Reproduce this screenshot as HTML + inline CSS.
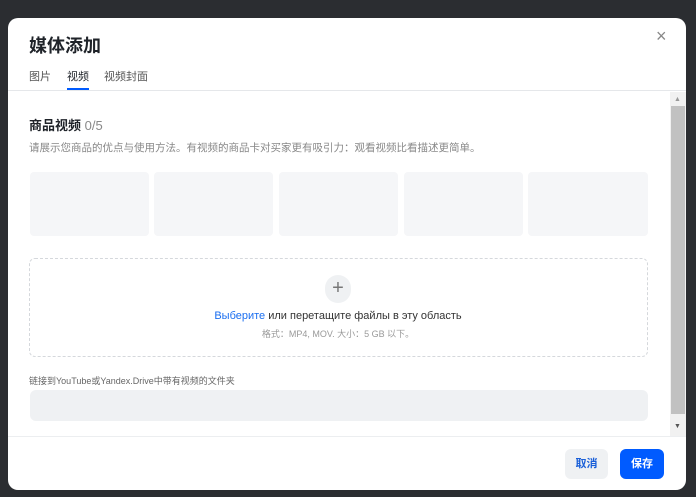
<html><head><style>
body{margin:0;width:696px;height:497px;background:#2b2d31;font-family:"Liberation Sans","Noto Sans CJK SC",sans-serif;position:relative;overflow:hidden}
.m{position:absolute;left:8px;top:18px;width:678px;height:472px;background:#fff;border-radius:10px;overflow:hidden}
.a{position:absolute}
</style></head><body>
<div class="m">
<div class="a" style="left:21px;top:14px;font-size:18px;font-weight:bold;color:#1f2329">媒体添加</div>
<div class="a" style="left:648px;top:8px;font-size:18px;color:#888">×</div>
<div class="a" style="left:21px;top:50px;font-size:11px;color:#555">图片</div>
<div class="a" style="left:59px;top:50px;font-size:11px;color:#1f2329">视频</div>
<div class="a" style="left:59px;top:70px;width:22px;height:2px;background:#005bff"></div>
<div class="a" style="left:96px;top:50px;font-size:11px;color:#555">视频封面</div>
<div class="a" style="left:0;top:72px;width:678px;height:1px;background:#e5e7ea"></div>
<div class="a" style="left:662px;top:74px;width:16px;height:344px;background:#f1f1f1"></div>
<div class="a" style="left:663px;top:88px;width:14px;height:308px;background:#c1c1c1"></div>
<div class="a" style="left:666px;top:78px;font-size:7px;color:#999">▲</div>
<div class="a" style="left:666px;top:405px;font-size:7px;color:#555">▼</div>
<div class="a" style="left:21px;top:97px;font-size:13px;font-weight:bold;color:#1f2329">商品视频 <span style="font-weight:normal;color:#888">0/5</span></div>
<div class="a" style="left:21px;top:122px;font-size:10.5px;color:#888">请展示您商品的优点与使用方法。有视频的商品卡对买家更有吸引力：观看视频比看描述更简单。</div>
<div class="a" style="left:22px;top:154px;width:119px;height:64px;background:#f5f6f8;border-radius:4px"></div>
<div class="a" style="left:146px;top:154px;width:119px;height:64px;background:#f5f6f8;border-radius:4px"></div>
<div class="a" style="left:271px;top:154px;width:119px;height:64px;background:#f5f6f8;border-radius:4px"></div>
<div class="a" style="left:396px;top:154px;width:119px;height:64px;background:#f5f6f8;border-radius:4px"></div>
<div class="a" style="left:520px;top:154px;width:120px;height:64px;background:#f5f6f8;border-radius:4px"></div>
<div class="a" style="left:21px;top:240px;width:617px;height:97px;border:1px dashed #d5d8dc;border-radius:6px"></div>
<div class="a" style="left:317px;top:257px;width:26px;height:28px;border-radius:13px;background:#eff1f3;color:#777;font-size:20px;line-height:27px;text-align:center">+</div>
<div class="a" style="left:0;top:292px;width:660px;text-align:center;font-size:11px;color:#333"><span style="color:#1a6ef0">Выберите</span> или перетащите файлы в эту область</div>
<div class="a" style="left:0;top:309px;width:660px;text-align:center;font-size:9px;color:#999">格式：MP4, MOV. 大小：5 GB 以下。</div>
<div class="a" style="left:21px;top:356px;font-size:9px;color:#666">链接到YouTube或Yandex.Drive中带有视频的文件夹</div>
<div class="a" style="left:22px;top:372px;width:618px;height:31px;background:#eff1f3;border-radius:6px"></div>
<div class="a" style="left:0;top:418px;width:678px;height:1px;background:#eceef0"></div>
<div class="a" style="left:557px;top:431px;width:43px;height:30px;background:#eff1f3;border-radius:6px;color:#1a5fd8;font-size:11px;font-weight:bold;line-height:30px;text-align:center">取消</div>
<div class="a" style="left:612px;top:431px;width:44px;height:30px;background:#005bff;border-radius:6px;color:#fff;font-size:11px;font-weight:bold;line-height:30px;text-align:center">保存</div>
</div>
</body></html>
